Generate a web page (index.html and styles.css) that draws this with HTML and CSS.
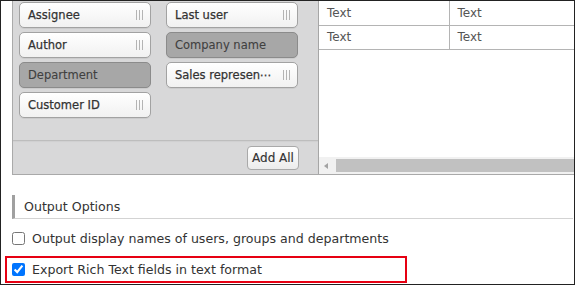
FILE: index.html
```html
<!DOCTYPE html>
<html lang="en">
<head>
  <meta charset="UTF-8" />
  <title>Export settings</title>
  <link rel="stylesheet" href="styles.css">
</head>
<body>
  <div id="frame">
    <div class="picker">
      <div class="fields">
        <div class="field-list">
          <div class="field"><span>Assignee</span><span class="grip"></span></div>
          <div class="field"><span>Last user</span><span class="grip"></span></div>
          <div class="field"><span>Author</span><span class="grip"></span></div>
          <div class="field selected"><span>Company name</span></div>
          <div class="field selected"><span>Department</span></div>
          <div class="field"><span>Sales represen⋯</span><span class="grip"></span></div>
          <div class="field"><span>Customer ID</span><span class="grip"></span></div>
        </div>
        <div class="fields-footer">
          <button class="add-all">Add All</button>
        </div>
      </div>

      <div class="preview">
        <table class="preview-table">
          <tr><td>Text</td><td>Text</td></tr>
          <tr><td>Text</td><td>Text</td></tr>
        </table>
        <div class="hscroll">
          <span class="arrow"></span>
          <span class="thumb"></span>
        </div>
      </div>
    </div>

    <div class="section-title">Output Options</div>

    <label class="option">
      <input type="checkbox">
      <span>Output display names of users, groups and departments</span>
    </label>
    <label class="option highlight">
      <input type="checkbox" checked>
      <span>Export Rich Text fields in text format</span>
    </label>
  </div>
</body>
</html>
```

FILE: styles.css
```css
* {
  box-sizing: border-box;
}

body {
  margin: 0;
  background: #fff;
  font-family: "DejaVu Sans", sans-serif;
  color: #333;
}

#frame {
  width: 575px;
  height: 285px;
  border: 1px solid #222;
  padding-left: 11px;
  overflow: hidden;
}

.picker {
  display: flex;
  height: 174px;
  border-bottom: 1px solid #a9a9a9;
}

.fields {
  width: 307px;
  display: flex;
  flex-direction: column;
  background: #d8d8d9;
  border-left: 1px solid #aaa;
  border-right: 1px solid #a6a6a6;
}

.field-list {
  flex: 1;
  padding: 1px 0 0 6px;
  display: grid;
  grid-template-columns: 132px 132px;
  grid-auto-rows: 26px;
  column-gap: 15px;
  row-gap: 4px;
  align-content: start;
}

.field {
  display: flex;
  align-items: center;
  justify-content: space-between;
  padding: 0 7px 0 8px;
  font-size: 11.5px;
  color: #333;
  -webkit-text-stroke: 0.25px #333;
  white-space: nowrap;
  background: linear-gradient(#ffffff, #f1f1f1);
  border: 1px solid #a2a2a2;
  border-radius: 5px;
  box-shadow: 0 1px 0 rgba(0,0,0,0.06);
}

.field.selected {
  background: #a7a7a7;
  border-color: #8b8b8b;
  color: #404040;
  -webkit-text-stroke: 0.1px #404040;
}

.grip {
  width: 7px;
  height: 10px;
  background: repeating-linear-gradient(to right, #b4b4b4 0 1px, transparent 1px 3px);
}

.fields-footer {
  height: 34px;
  display: flex;
  justify-content: flex-end;
  align-items: center;
  padding-right: 19px;
  border-top: 1px solid #bdbdbd;
  box-shadow: inset 0 1px 1px rgba(0,0,0,0.04);
}

.add-all {
  width: 52px;
  height: 24px;
  padding: 0;
  font-family: "DejaVu Sans", sans-serif;
  font-size: 12px;
  color: #333;
  -webkit-text-stroke: 0.15px #333;
  background: linear-gradient(#ffffff, #ececec);
  border: 1px solid #a9a9a9;
  border-radius: 4px;
}

.preview {
  flex: 1;
  display: flex;
  flex-direction: column;
  background: #fff;
}

.preview-table {
  border-collapse: collapse;
  width: 100%;
}

.preview-table td {
  height: 24px;
  padding: 0 0 0 8px;
  font-size: 12px;
  color: #555;
  border-bottom: 1px solid #b4b4b4;
}

.preview-table td:first-child {
  width: 130px;
  border-right: 1px solid #b4b4b4;
}

.hscroll {
  margin-top: auto;
  height: 17px;
  display: flex;
  align-items: center;
  background: #f1f1f1;
}

.arrow {
  width: 0;
  height: 0;
  margin: 0 8px 0 5px;
  border-top: 3px solid transparent;
  border-bottom: 3px solid transparent;
  border-right: 4px solid #a3a3a3;
}

.thumb {
  flex: 1;
  height: 13px;
  background: #c1c1c1;
}

.section-title {
  margin: 20px 1px 0 0;
  height: 24px;
  line-height: 23px;
  padding-left: 9px;
  font-size: 12.6px;
  color: #333;
  border-left: 3px solid #a0a0a0;
  border-bottom: 1px solid #d3d3d3;
}

.option {
  display: flex;
  align-items: center;
  height: 23px;
  margin-top: 8px;
  font-size: 12.6px;
  color: #333;
}

.option input {
  width: 13px;
  height: 13px;
  margin: 0 7px 0 0;
}

.option.highlight {
  width: 402px;
  height: 27px;
  margin: 6px 0 0 -7px;
  padding-left: 5px;
  border: 2px solid #e60012;
}
```
